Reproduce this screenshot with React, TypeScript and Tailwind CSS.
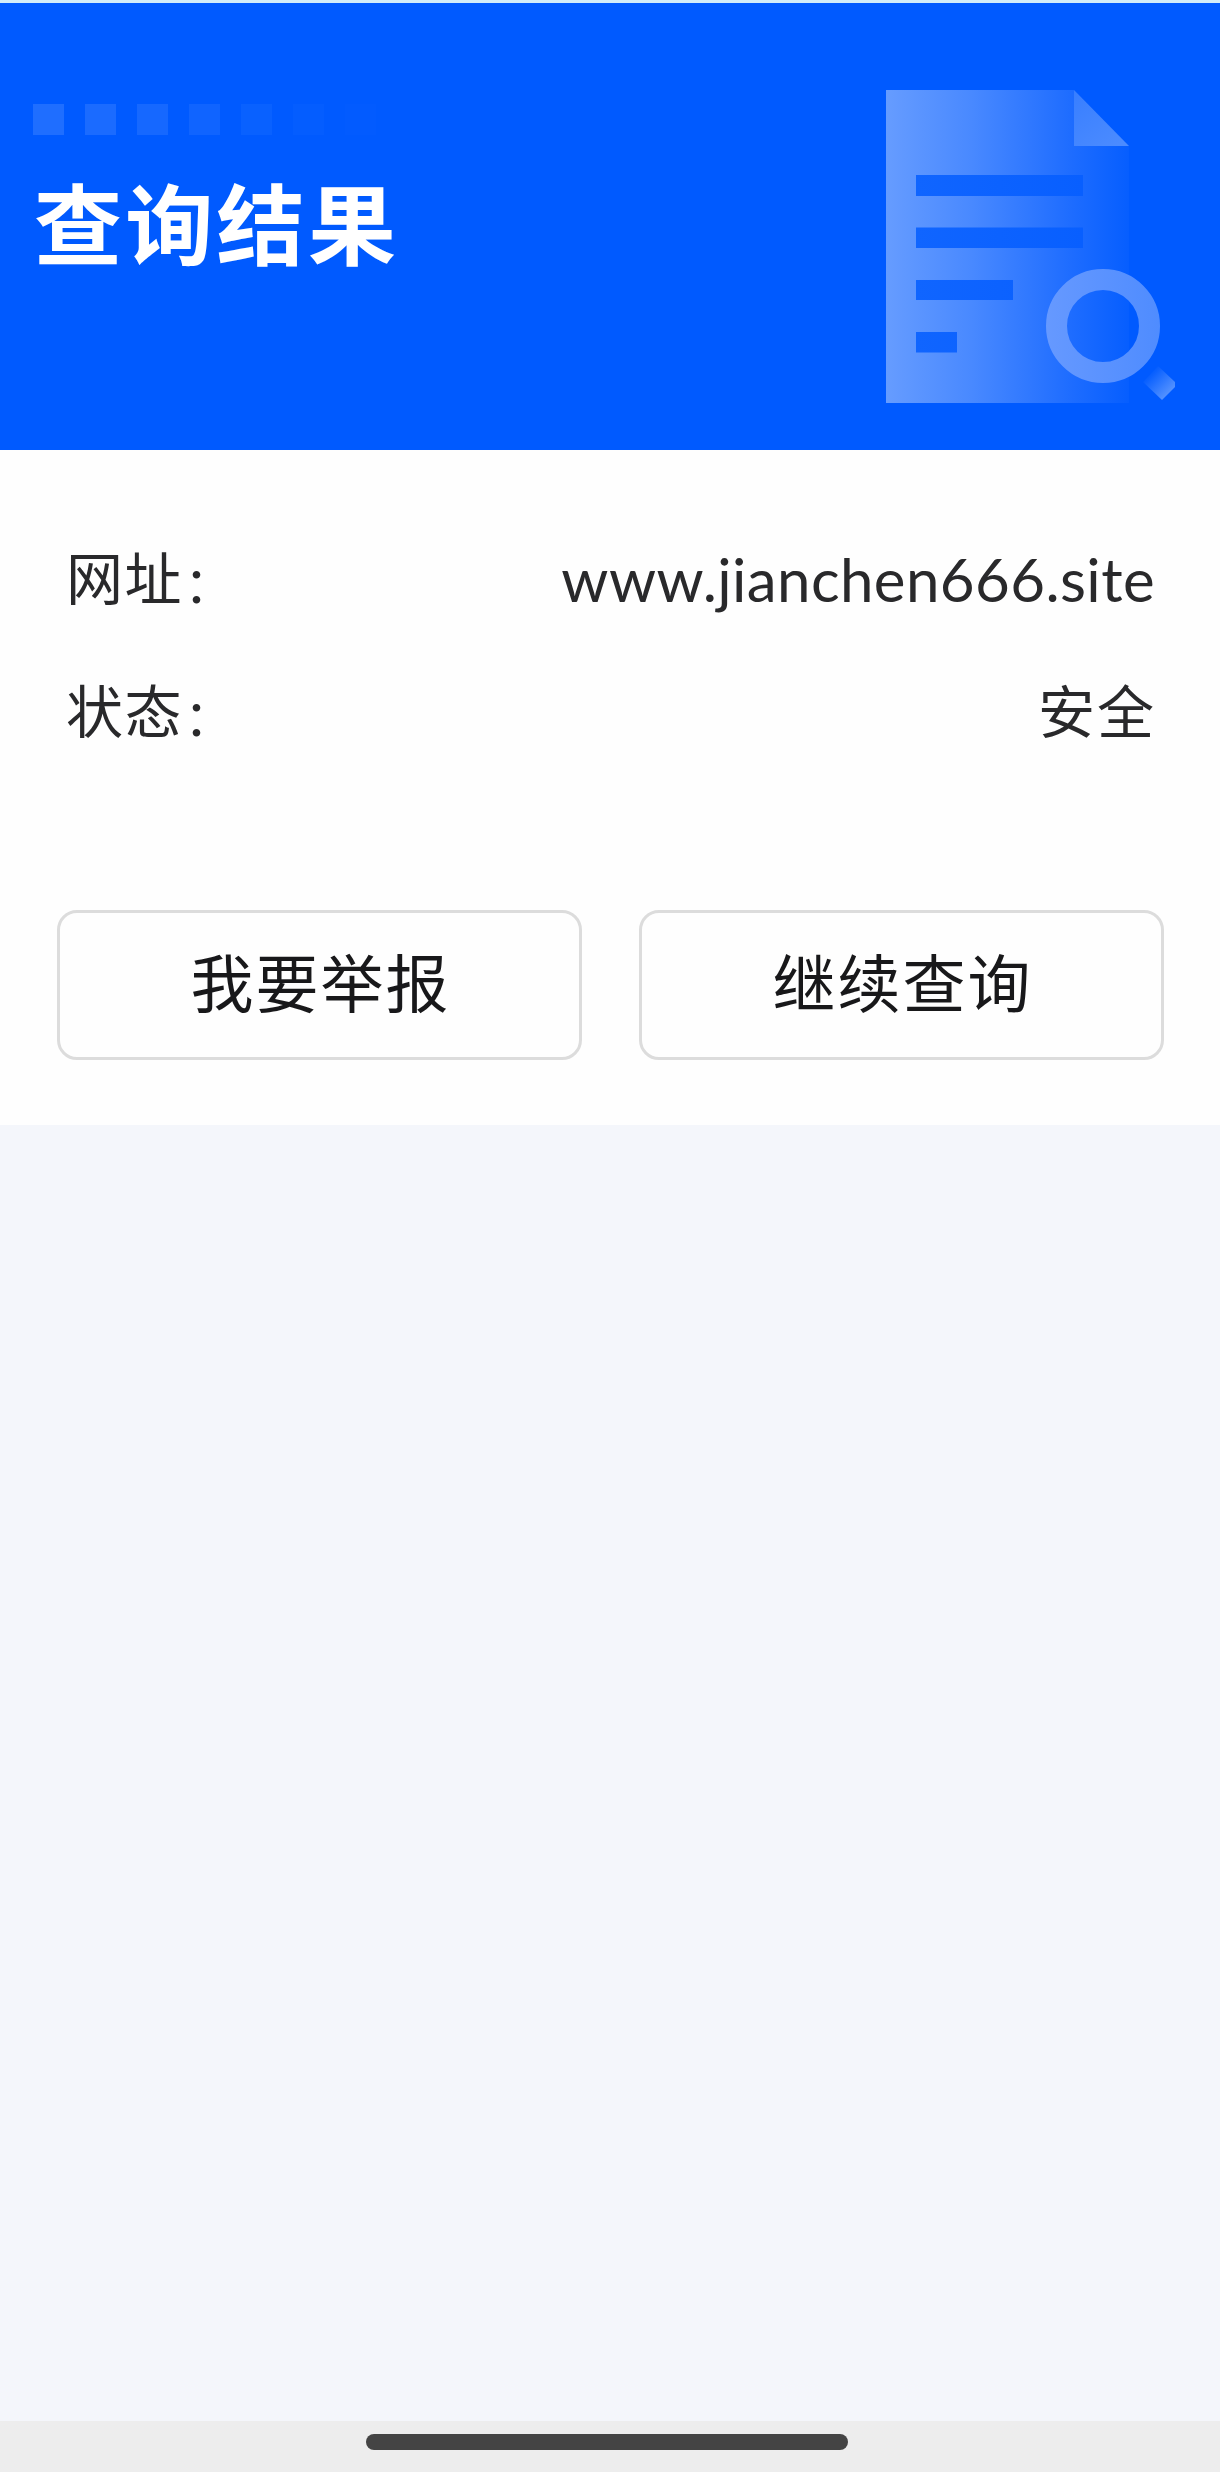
import React from 'react';

const ReportIcon: React.FC = () => (
  <svg width="292" height="314" viewBox="0 0 292 314" fill="none">
    <defs>
      <linearGradient id="page" x1="0" y1="0" x2="243" y2="0" gradientUnits="userSpaceOnUse">
        <stop stopColor="#669cff" />
        <stop offset="0.35" stopColor="#4989ff" />
        <stop offset="0.75" stopColor="#1f6dff" />
        <stop offset="1" stopColor="#065eff" />
      </linearGradient>
      <linearGradient id="row" x1="30" y1="0" x2="197" y2="0" gradientUnits="userSpaceOnUse">
        <stop stopColor="#1065ff" />
        <stop offset="1" stopColor="#085fff" />
      </linearGradient>
      <linearGradient id="fold" x1="188" y1="0" x2="230" y2="56" gradientUnits="userSpaceOnUse">
        <stop stopColor="#387eff" />
        <stop offset="1" stopColor="#4b8bff" />
      </linearGradient>
      <linearGradient id="ring" x1="160" y1="0" x2="274" y2="0" gradientUnits="userSpaceOnUse">
        <stop stopColor="#6699ff" />
        <stop offset="1" stopColor="#4f8cff" />
      </linearGradient>
      <linearGradient id="handle" x1="263" y1="283" x2="283" y2="303" gradientUnits="userSpaceOnUse">
        <stop stopColor="#005aff" />
        <stop offset="1" stopColor="#5391ff" />
      </linearGradient>
    </defs>
    <path d="M0 0H188V56H243V313H0Z" fill="url(#page)" />
    <path d="M188 0L243 56H188Z" fill="url(#fold)" />
    <path d="M30 85H197V106H30ZM30 137.500H197V158H30ZM30 190H127V210H30ZM30 242H71V262.500H30Z" fill="url(#row)" />
    <circle cx="217" cy="236" r="46.500" stroke="url(#ring)" strokeWidth="21" />
    <path d="M272 276L289 292V297L276 310L257 292Z" fill="url(#handle)" />
  </svg>
);

const App: React.FC = () => {
  const squares = [
    'bg-[#1f6eff]',
    'bg-[#1b6bff]',
    'bg-[#1668ff]',
    'bg-[#1064ff]',
    'bg-[#0961ff]',
    'bg-[#045dff]',
    'bg-[#025bff]'
  ];

  const rows = [
    { label: '网址', value: 'www.jianchen666.site', style: "font-['Lato',sans-serif] text-[60px] tracking-[0.4px] pt-[6px] -mr-[1px]" },
    { label: '状态', value: '安全', style: 'text-[57px] tracking-[2px] -mr-[2px]' }
  ];

  const actions = ['我要举报', '继续查询'];

  return (
    <div className="flex h-[2472px] w-[1220px] flex-col bg-[#f4f6fb] font-['Noto_Sans_CJK_SC',sans-serif]">
      {/* Header */}
      <header className="flex h-[450px] justify-between border-t-3 border-[#d3edf9] bg-[#005aff] pt-[87px] pr-[42px] pl-[33px]">
        <div className="pt-[14px]">
          <div className="flex gap-[21px]">
            {squares.map((color) => (
              <div key={color} className={`size-[31px] ${color}`}></div>
            ))}
          </div>
          <h1 className="mt-[21px] ml-[1px] text-[88px] leading-[128px] font-bold tracking-[3.3px] whitespace-nowrap text-white">
            查询结果
          </h1>
        </div>
        <ReportIcon />
      </header>

      {/* Result */}
      <main className="h-[675px] bg-[#fefefe] pt-[59px] pr-[56px] pl-[57px]">
        {rows.map((row) => (
          <div key={row.label} className="flex h-[133px] items-center justify-between pr-[10px] pl-[9px] text-[#29292b]">
            <span className="flex items-center text-[57px] tracking-[1.500px]">
              {row.label}
              <span className="pt-[11px] pl-[1px] text-[50px]">：</span>
            </span>
            <span className={row.style}>{row.value}</span>
          </div>
        ))}
        <div className="mt-[135px] flex justify-between">
          {actions.map((action) => (
            <button
              key={action}
              className="h-[150px] w-[525px] rounded-[20px] border-3 border-[#dcdcdc] pb-[9px] pl-[2px] text-[63px] tracking-[2px] text-[#18181a]"
            >
              {action}
            </button>
          ))}
        </div>
      </main>

      {/* Home indicator */}
      <footer className="mt-auto h-[51px] bg-[#ededed] pt-[13px]">
        <div className="ml-[366px] h-[16px] w-[482px] rounded-full bg-[#444444]"></div>
      </footer>
    </div>
  );
};

export default App;
